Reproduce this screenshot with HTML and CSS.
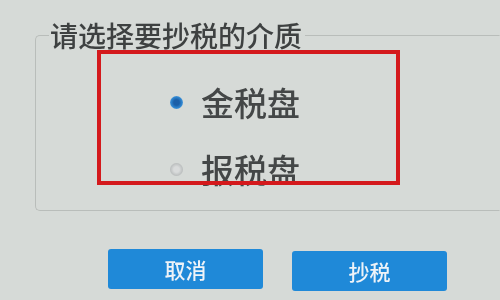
FILE: index.html
```html
<!DOCTYPE html>
<html lang="zh-CN">
<head>
<meta charset="utf-8">
<title>抄税</title>
<link rel="stylesheet" href="styles.css">
</head>
<body>
<main class="dialog">
  <fieldset class="media">
    <legend class="media-title">请选择要抄税的介质</legend>
    <div class="options">
      <label class="opt"><span class="radio radio-on"></span>金税盘</label>
      <label class="opt"><span class="radio"></span>报税盘</label>
    </div>
  </fieldset>
  <div class="actions">
    <button class="btn" type="button">取消</button>
    <button class="btn btn-second" type="button">抄税</button>
  </div>
  <div class="highlight"></div>
</main>
</body>
</html>
```

FILE: styles.css
```css
html, body {
  margin: 0;
  padding: 0;
  width: 500px;
  height: 300px;
  overflow: hidden;
  background: #d6dad7;
}

.dialog {
  position: relative;
  width: 500px;
  height: 300px;
  display: flex;
  flex-direction: column;
  font-family: "Noto Sans CJK SC", "Noto Sans", sans-serif;
  filter: blur(0.5px);
}

.media {
  margin: 21px 0 0 35px;
  padding: 0 0 21px 13px;
  width: 465px;
  min-width: 0;
  box-sizing: border-box;
  border: 1px solid #b9bdba;
  border-right-color: transparent;
  border-radius: 5px 0 0 5px;
}

.media-title {
  padding: 0 3px 0 1px;
  font-size: 28px;
  line-height: 28px;
  font-weight: 500;
  color: #3e4141;
}

.options {
  display: flex;
  flex-direction: column;
  gap: 27px;
  padding: 33px 0 0 121px;
}

.opt {
  display: flex;
  align-items: center;
  height: 40px;
  font-size: 33px;
  line-height: 40px;
  font-weight: 500;
  color: #444747;
}

.radio {
  width: 13px;
  height: 13px;
  border-radius: 50%;
  margin-right: 18px;
  flex: none;
  background: radial-gradient(circle, #d9dbdb 0 30%, #b9bcbc 70%, #aeb1b1 100%);
}

.radio-on {
  background: radial-gradient(circle, #1b5fa8 0 30%, #2f86d0 60%, #9cc4e6 100%);
}

.actions {
  display: flex;
  gap: 29px;
  margin-top: 38px;
  padding-left: 108px;
}

.btn {
  width: 155px;
  height: 40px;
  border: none;
  border-radius: 3px;
  background: #1f89d8;
  color: #eef3f8;
  font-family: "Noto Sans CJK SC", "Noto Sans", sans-serif;
  font-size: 21px;
  font-weight: 500;
  line-height: 40px;
  padding: 0;
}

.btn-second {
  margin-top: 2px;
}

.highlight {
  position: absolute;
  left: 97px;
  top: 50px;
  width: 303px;
  height: 135px;
  box-sizing: border-box;
  border: 4px solid #d4191c;
}
```
